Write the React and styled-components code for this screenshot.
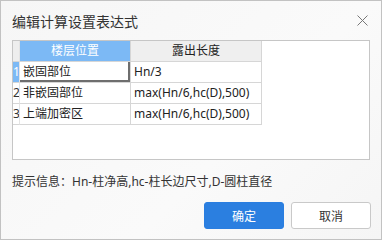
import React from 'react';
import styled, { createGlobalStyle } from 'styled-components';

const GlobalStyle = createGlobalStyle`
    html, body {
        margin: 0;
        padding: 0;
        background: #ffffff;
    }
`;

const Dialog = styled.div`
    box-sizing: border-box;
    width: 382px;
    height: 240px;
    border: 1px solid #c2c2c2;
    background: linear-gradient(135deg, #f6f6f6 0%, #fafafa 60%, #f5f5f5 100%);
    font-family: "Noto Sans", "Noto Sans CJK SC", sans-serif;
    color: #333333;
    display: flex;
    flex-direction: column;
`;

const TitleBar = styled.div`
    height: 39px;
    display: flex;
    align-items: center;
    justify-content: space-between;
    padding: 0 12px 0 11px;
`;

const Title = styled.span`
    font-family: "Noto Sans CJK SC", sans-serif;
    font-size: 14px;
    color: #333333;
    margin-top: 1px;
`;

const CloseButton = styled.button`
    border: none;
    background: none;
    padding: 0;
    width: 12px;
    height: 12px;
    display: flex;
    align-items: center;
    justify-content: center;
    margin-right: 1px;
`;

const Panel = styled.div`
    box-sizing: border-box;
    margin: 0 11px;
    height: 120px;
    border: 1px solid #c6c6c6;
    background: #ffffff;
`;

const Grid = styled.div`
    display: grid;
    grid-template-columns: 7px 111px 131px;
    grid-auto-rows: 21px;
`;

const Cell = styled.div`
    box-sizing: border-box;
    border-right: 1px solid ${p => (p.$num ? '#e4e4e4' : '#d6d6d6')};
    border-bottom: 1px solid #d6d6d6;
    font-size: 12px;
    line-height: 20px;
    white-space: nowrap;
    overflow: hidden;
    padding: ${p => (p.$num ? '0' : '0 3px')};
    text-align: ${p => (p.$center ? 'center' : 'left')};
    background: ${p => p.$bg || '#ffffff'};
    color: ${p => p.$color || '#222222'};
    box-shadow: ${p => (p.$focus ? 'inset -2px -2px 0 #6e6e6e' : 'none')};
    font-family: "Noto Sans", "Noto Sans CJK SC", sans-serif;
`;

const Hint = styled.div`
    margin: 14px 0 0 11px;
    font-size: 12px;
    line-height: 16px;
    color: #333333;
    font-family: "Noto Sans", "Noto Sans CJK SC", sans-serif;
`;

const Footer = styled.div`
    display: flex;
    justify-content: flex-end;
    gap: 7px;
    margin-top: auto;
    padding: 0 10px 10px 0;
`;

const Button = styled.button`
    box-sizing: border-box;
    width: 80px;
    height: 27px;
    border-radius: 3px;
    border: 1px solid ${p => (p.$primary ? '#2a7ee0' : '#c9c9c9')};
    background: ${p => (p.$primary ? '#2b7fe0' : '#ffffff')};
    color: ${p => (p.$primary ? '#ffffff' : '#333333')};
    font-family: "Noto Sans CJK SC", sans-serif;
    font-size: 12px;
    padding: 0;
`;

const rows = [
    { name: '嵌固部位', value: 'Hn/3' },
    { name: '非嵌固部位', value: 'max(Hn/6,hc(D),500)' },
    { name: '上端加密区', value: 'max(Hn/6,hc(D),500)' },
];

const App = () => {
    return (
        <>
            <GlobalStyle />
            <Dialog>
                <TitleBar>
                    <Title>编辑计算设置表达式</Title>
                    <CloseButton>
                        <svg width="11" height="11" viewBox="0 0 11 11">
                            <path d="M0.5 0.5 L10.5 10.5 M10.5 0.5 L0.5 10.5" stroke="#777777" strokeWidth="1" fill="none" />
                        </svg>
                    </CloseButton>
                </TitleBar>
                <Panel>
                    <Grid>
                        <Cell $num $bg="#eeeeee" />
                        <Cell $center $bg="#7cb9f5" $color="#ffffff">楼层位置</Cell>
                        <Cell $center $bg="#efefef">露出长度</Cell>
                        {rows.map((row, i) => (
                            <React.Fragment key={row.name}>
                                <Cell
                                    $num
                                    $center
                                    $bg={i === 0 ? '#7cb9f5' : '#ffffff'}
                                    $color={i === 0 ? '#ffffff' : '#333333'}
                                >
                                    {i + 1}
                                </Cell>
                                <Cell $focus={i === 0}>{row.name}</Cell>
                                <Cell>{row.value}</Cell>
                            </React.Fragment>
                        ))}
                    </Grid>
                </Panel>
                <Hint>提示信息：Hn-柱净高,hc-柱长边尺寸,D-圆柱直径</Hint>
                <Footer>
                    <Button $primary>确定</Button>
                    <Button>取消</Button>
                </Footer>
            </Dialog>
        </>
    );
};

export default App;
